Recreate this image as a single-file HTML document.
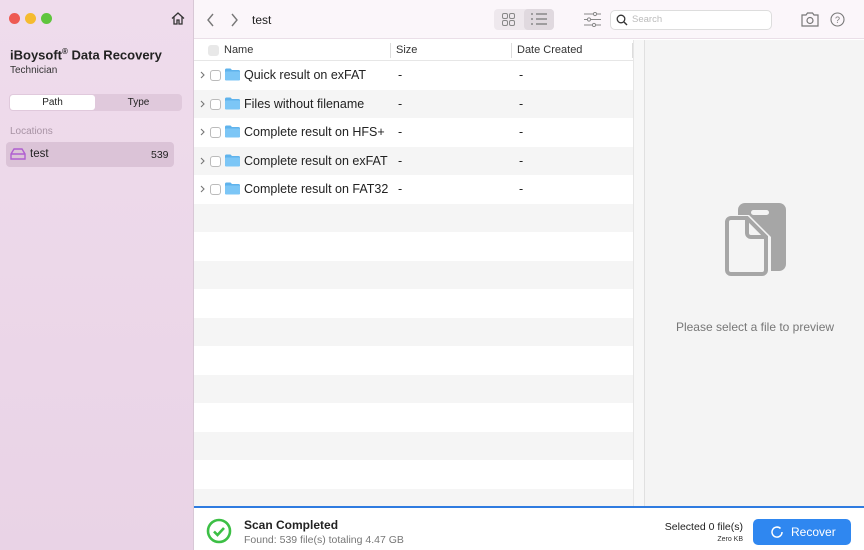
<!DOCTYPE html><html><head><style>
*{margin:0;padding:0;box-sizing:border-box}
body{width:864px;height:550px;overflow:hidden;font-family:"Liberation Sans",sans-serif;position:relative;background:#fff;color:#222}
.sb{position:absolute;left:0;top:0;width:194px;height:550px;background:linear-gradient(#efdcec,#e9d3e6);border-right:1px solid #d8c8d6}
.dot{position:absolute;top:13px;width:11px;height:11px;border-radius:50%}
.tb{position:absolute;left:194px;top:0;width:670px;height:39px;background:#fbf6fa;border-bottom:1px solid #eadfe8}
.hdr{position:absolute;left:194px;top:40px;width:439px;height:21px;background:#fff;font-size:11px;color:#333;border-bottom:1px solid #e6e6e6}
.row{position:absolute;left:194px;width:439px;height:28.5px;font-size:12.5px;color:#222}
.cb{position:absolute;left:16px;width:11px;height:11px;border:1px solid #bbb;border-radius:3px;background:#fff}
.pv{position:absolute;left:644px;top:40px;width:220px;height:466px;background:#f4f4f4;border-left:1px solid #e0e0e0}
.gap{position:absolute;left:633px;top:40px;width:11px;height:466px;background:#f7f7f7;border-left:1px solid #e6e6e6}
.bot{position:absolute;left:194px;top:506px;width:670px;height:44px;background:#fff;border-top:2px solid #2f7be0}
</style></head><body>
<div class="sb">
<div class="dot" style="left:9px;background:#ee5a52"></div>
<div class="dot" style="left:25px;background:#f5bb2f"></div>
<div class="dot" style="left:41px;background:#5fc53d"></div>
<svg style="position:absolute;left:171px;top:12px" width="14" height="13" viewBox="0 0 14 13"><path d="M1 6.5L7 1l6 5.5M3 5v7h3V8h2v4h3V5" fill="none" stroke="#333" stroke-width="1.3"/></svg>
<div style="position:absolute;left:10px;top:47px;font-size:13px;font-weight:bold;color:#222">iBoysoft<sup style="font-size:8px">®</sup> Data Recovery</div>
<div style="position:absolute;left:10px;top:65px;font-size:10px;color:#333">Technician</div>
<div style="position:absolute;left:9px;top:94px;width:173px;height:17px;background:#e0c9dc;border-radius:4px"></div>
<div style="position:absolute;left:10px;top:95px;width:85px;height:15px;background:#fff;border-radius:3px;font-size:10px;text-align:center;line-height:15px">Path</div>
<div style="position:absolute;left:96px;top:95px;width:85px;height:15px;font-size:10px;text-align:center;line-height:15px">Type</div>
<div style="position:absolute;left:10px;top:126px;font-size:10px;color:#a893a4">Locations</div>
<div style="position:absolute;left:6px;top:142px;width:168px;height:25px;background:#dbc3d7;border-radius:4px"></div>
<svg style="position:absolute;left:10px;top:148px" width="16" height="12" viewBox="0 0 16 12"><path d="M1 6L4 1h8l3 5v5H1zM1 6h14" fill="none" stroke="#b05ed0" stroke-width="1.4"/></svg>
<div style="position:absolute;left:30px;top:148px;font-size:11.5px">test</div>
<div style="position:absolute;left:151px;top:149px;font-size:10.5px">539</div>
</div>
<div class="tb">
<svg style="position:absolute;left:12px;top:13px" width="10" height="14"><path d="M7 1L2 7l5 6" fill="none" stroke="#777" stroke-width="1.4"/></svg>
<svg style="position:absolute;left:35px;top:13px" width="10" height="14"><path d="M3 1l5 6-5 6" fill="none" stroke="#777" stroke-width="1.4"/></svg>
<div style="position:absolute;left:58px;top:13px;font-size:12px">test</div>
<div style="position:absolute;left:300px;top:9px;width:60px;height:21px;background:#eee8ed;border-radius:4px"></div>
<div style="position:absolute;left:330px;top:9px;width:30px;height:21px;background:#e0d9df;border-radius:4px"></div>
<svg style="position:absolute;left:308px;top:13px" width="13" height="13"><g fill="none" stroke="#888"><rect x=".5" y=".5" width="5" height="5" rx="1.5"/><rect x="7.5" y=".5" width="5" height="5" rx="1.5"/><rect x=".5" y="7.5" width="5" height="5" rx="1.5"/><rect x="7.5" y="7.5" width="5" height="5" rx="1.5"/></g></svg>
<svg style="position:absolute;left:337px;top:13px" width="16" height="12"><g stroke="#777" stroke-width="1.3"><path d="M0 1h2M5 1h11M0 6h2M5 6h11M0 11h2M5 11h11"/></g></svg>
<svg style="position:absolute;left:390px;top:12px" width="17" height="15"><g stroke="#888" fill="#fbf6fa"><path d="M0 2h17M0 7.5h17M0 13h17"/><circle cx="11" cy="2" r="1.6"/><circle cx="5" cy="7.5" r="1.6"/><circle cx="10" cy="13" r="1.6"/></g></svg>
<div style="position:absolute;left:416px;top:10px;width:162px;height:20px;background:#fff;border:1px solid #ddd;border-radius:5px"></div>
<svg style="position:absolute;left:422px;top:14px" width="12" height="12"><circle cx="5" cy="5" r="3.8" fill="none" stroke="#333" stroke-width="1.3"/><path d="M8 8l3 3" stroke="#333" stroke-width="1.4"/></svg>
<div style="position:absolute;left:438px;top:14px;font-size:9.5px;color:#bbb">Search</div>
<svg style="position:absolute;left:607px;top:12px" width="18" height="15"><path d="M1 3h4l1.5-2h5L13 3h4v11H1z" fill="none" stroke="#777" stroke-width="1.2"/><circle cx="9" cy="8.5" r="3" fill="none" stroke="#777" stroke-width="1.2"/></svg>
<svg style="position:absolute;left:636px;top:12px" width="15" height="15"><circle cx="7.5" cy="7.5" r="6.5" fill="none" stroke="#777" stroke-width="1.1"/><text x="7.5" y="11" font-size="9" text-anchor="middle" fill="#777" font-family="Liberation Sans">?</text></svg>
</div>
<div class="hdr">
<div class="cb" style="top:5px;left:14px;background:#e8e8e8;border-color:#e8e8e8"></div>
<div style="position:absolute;left:30px;top:4px">Name</div>
<div style="position:absolute;left:196px;top:3px;width:1px;height:15px;background:#ddd"></div>
<div style="position:absolute;left:202px;top:4px">Size</div>
<div style="position:absolute;left:317px;top:3px;width:1px;height:15px;background:#ddd"></div>
<div style="position:absolute;left:323px;top:4px">Date Created</div>
<div style="position:absolute;left:438px;top:3px;width:1px;height:15px;background:#ddd"></div>
</div>
<div class="gap"></div>
<svg style="position:absolute;left:651px;top:45px" width="13" height="11"><rect x=".5" y=".5" width="10" height="7" rx="1.5" fill="none" stroke="#777"/><rect x="2.5" y="3" width="10" height="7" rx="1.5" fill="#f4f4f4" stroke="#777"/></svg>
<div id="rows"></div>
<div class="pv">
<svg style="position:absolute;left:78px;top:163px" width="64" height="76" viewBox="0 0 64 76"><rect x="15" y="0" width="48" height="68" rx="7" fill="#a6a6a6"/><rect x="28" y="7" width="18" height="5" rx="2.5" fill="#f4f4f4"/><path d="M8 12h18l22 22v34a6 6 0 0 1-6 6H8a6 6 0 0 1-6-6V18a6 6 0 0 1 6-6z" fill="#f4f4f4"/><path d="M8 15h16l19 19v33a4 4 0 0 1-4 4H8a4 4 0 0 1-4-4V19a4 4 0 0 1 4-4z" fill="none" stroke="#a6a6a6" stroke-width="4"/><path d="M24 15v15a4 4 0 0 0 4 4h15" fill="none" stroke="#a6a6a6" stroke-width="4"/></svg>
<div style="position:absolute;left:0;width:220px;top:280px;text-align:center;font-size:12px;color:#777">Please select a file to preview</div>
</div>
<div class="bot">
<svg style="position:absolute;left:12px;top:10px" width="26" height="26"><circle cx="13" cy="13" r="11" fill="none" stroke="#3cbf45" stroke-width="2.6"/><path d="M8 13.5l3.5 3.5 6.5-7" fill="none" stroke="#3cbf45" stroke-width="2.6"/></svg>
<div style="position:absolute;left:50px;top:10px;font-size:12px;font-weight:bold;color:#222">Scan Completed</div>
<div style="position:absolute;left:50px;top:26px;font-size:10.5px;color:#777">Found: 539 file(s) totaling 4.47 GB</div>
<div style="position:absolute;right:121px;top:13px;font-size:10.5px;color:#222">Selected 0 file(s)</div>
<div style="position:absolute;right:121px;top:28px;font-size:7px;color:#333">Zero KB</div>
<div style="position:absolute;left:559px;top:11px;width:98px;height:26px;background:#2f87f0;border-radius:5px;color:#fff;font-size:12px;line-height:26px"><svg style="position:absolute;left:18px;top:7px" width="12" height="12"><path d="M9.5 2.5A5 5 0 1 0 11 6" fill="none" stroke="#fff" stroke-width="1.5"/></svg><span style="position:absolute;left:38px">Recover</span></div>
</div>
<script>
var names=["Quick result on exFAT","Files without filename","Complete result on HFS+","Complete result on exFAT","Complete result on FAT32"];
var h="";
for(var i=0;i<16;i++){var t=61+i*28.5;if(t>506)break;var bg=i%2?"#f5f5f5":"#fff";
h+='<div class="row" style="top:'+t+'px;height:'+Math.min(28.5,506-t)+'px;background:'+bg+'">';
if(i<5){h+='<svg style="position:absolute;left:6px;top:10px" width="5" height="8"><path d="M1 1l3 3-3 3" fill="none" stroke="#777" stroke-width="1.1"/></svg><div class="cb" style="top:9px"></div><svg style="position:absolute;left:31px;top:7px" width="15" height="13"><path d="M0 2a1.5 1.5 0 0 1 1.5-1.5h4l1.5 1.5h6.5A1.5 1.5 0 0 1 15 3.5V12H0z" fill="#5fb3ec"/><rect x="0" y="3.5" width="15" height="9" rx="1" fill="#7cc6f6"/></svg><div style="position:absolute;left:50px;top:7px">'+names[i]+'</div><div style="position:absolute;left:204px;top:7px">-</div><div style="position:absolute;left:325px;top:7px">-</div>';}
h+='</div>';}
document.getElementById("rows").innerHTML=h;
</script>
</body></html>
